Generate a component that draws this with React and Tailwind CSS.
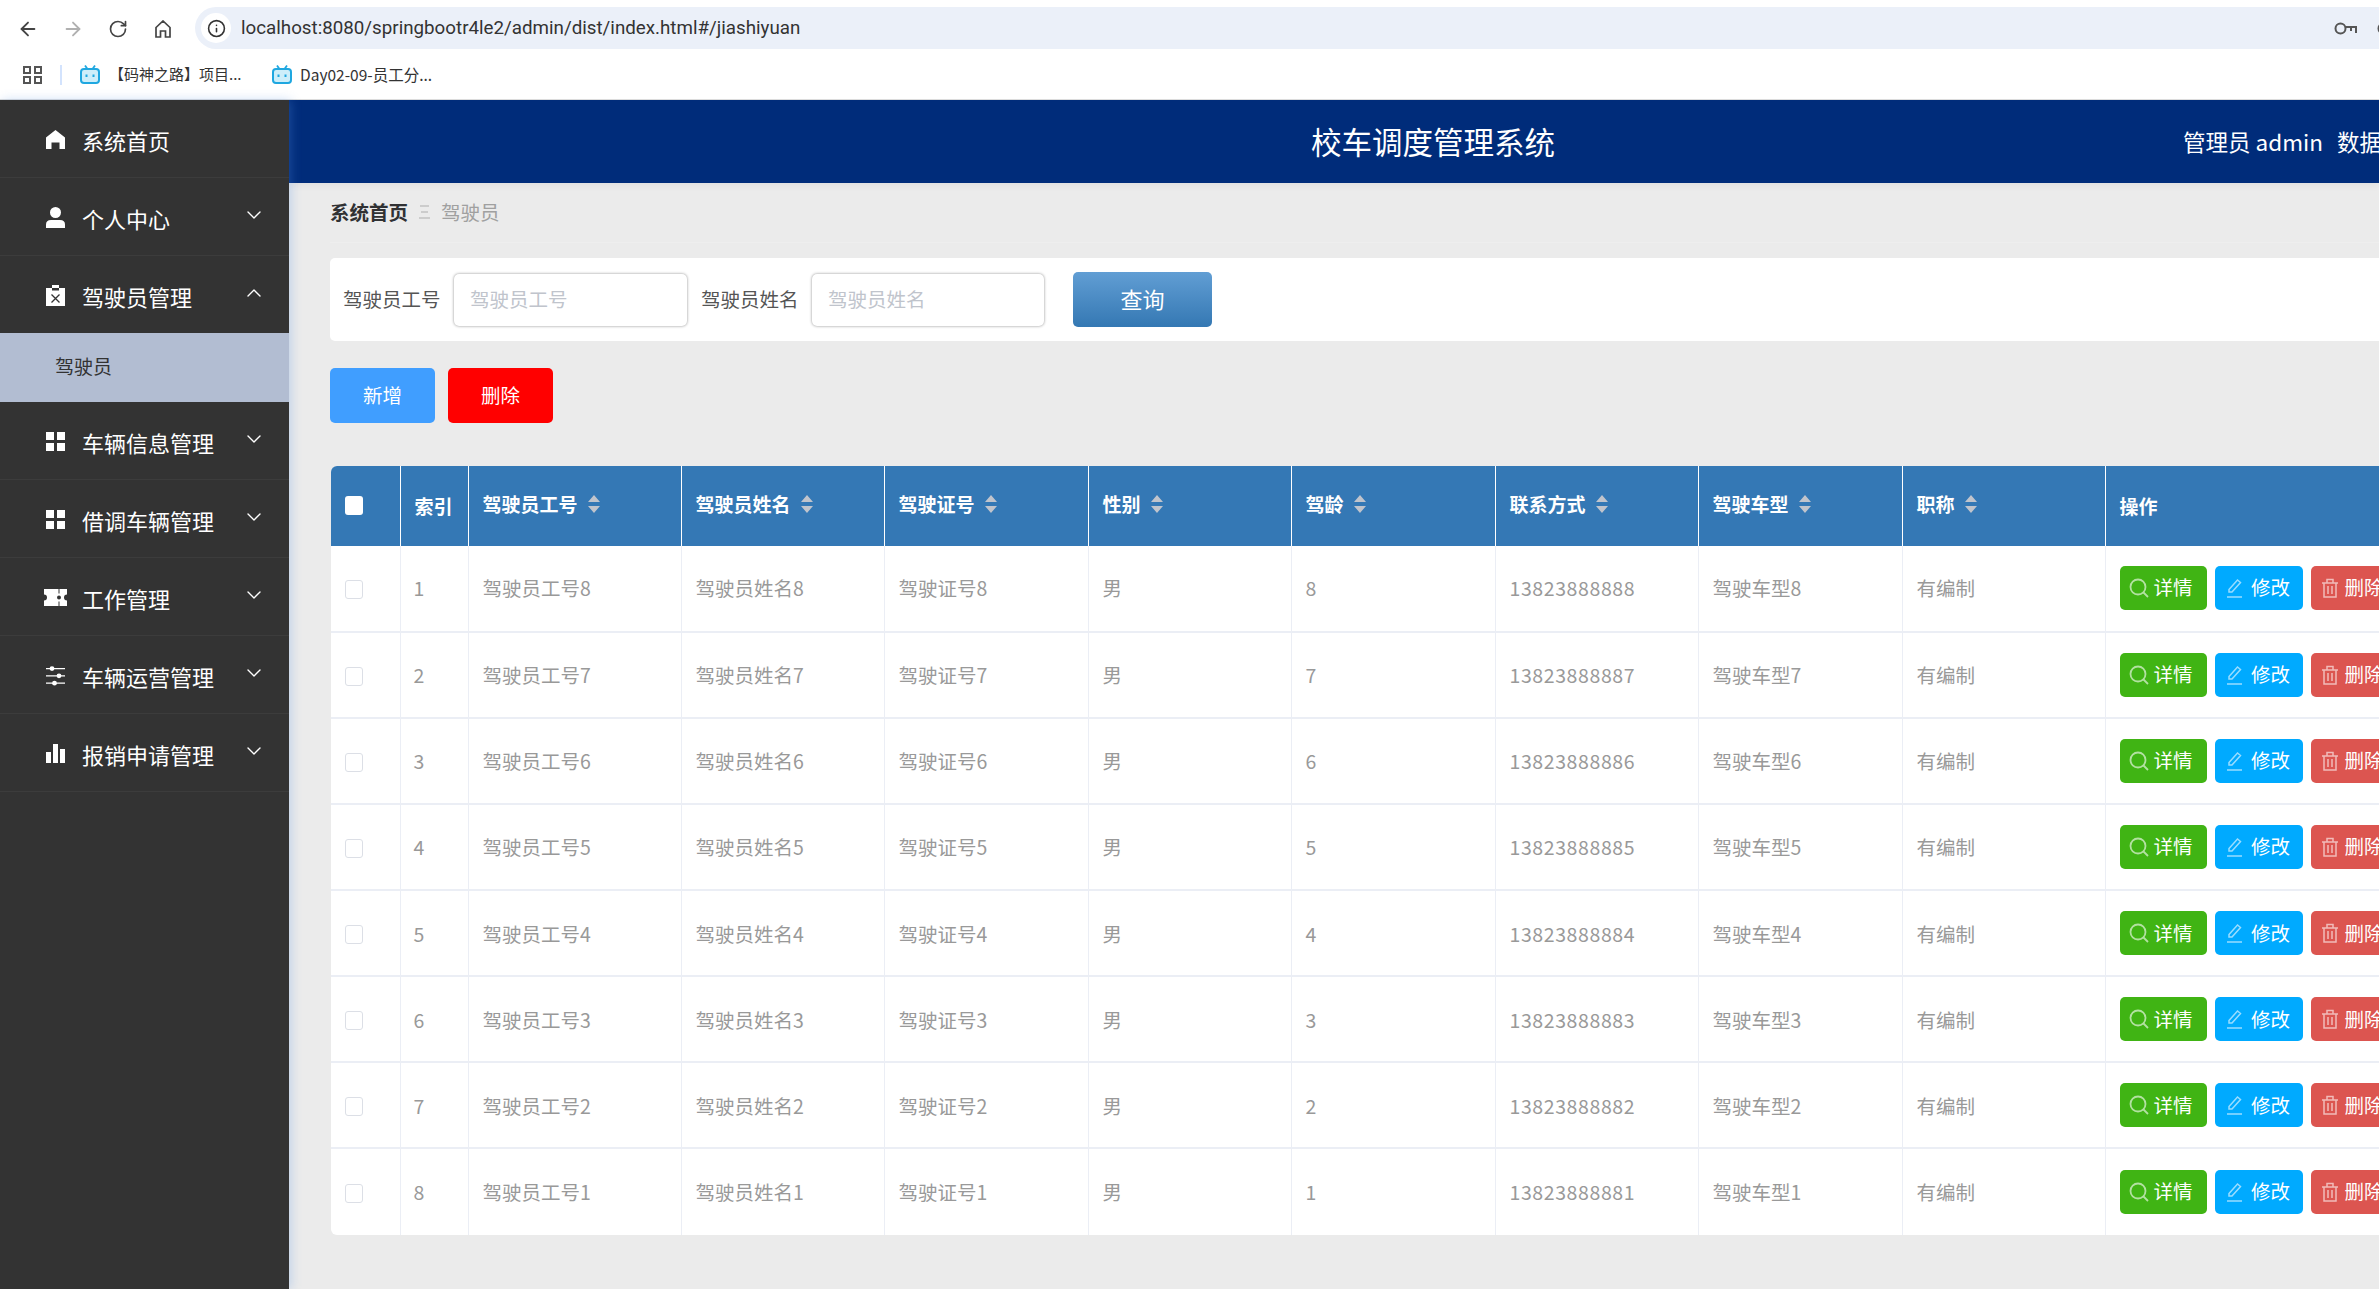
import { ArrowLeft, ArrowRight, RotateCw, Info, ChevronDown, ChevronUp } from "lucide-react";

const font = "font-['Noto_Sans_CJK_SC','Noto_Sans',sans-serif]";

function HomeIcon() {
    return (
        <svg viewBox="0 0 19 19" className="w-[19px] h-[19px] fill-white">
            <path d="M9.5 0 19 7.5V19h-5.5v-6.5h-8V19H0V7.5z" />
        </svg>
    );
}

function UserIcon() {
    return (
        <svg viewBox="0 0 19 21" className="w-[19px] h-[21px] fill-white">
            <circle cx="9.5" cy="5.5" r="5.5" />
            <path d="M0 21v-3.5Q0 13 5 13h9q5 0 5 4.5V21z" />
        </svg>
    );
}

function ClipboardIcon() {
    return (
        <svg viewBox="0 0 19 21" className="w-[19px] h-[21px]">
            <path d="M0 3h6V0h7v3h6v18H0z" fill="#fff" />
            <path d="M6 3h7v2.5H6z" fill="#333" />
            <path d="M5.5 9.5l8 8M13.5 9.5l-8 8" stroke="#333" strokeWidth="1.3" />
        </svg>
    );
}

function GridIcon() {
    return (
        <svg viewBox="0 0 19 19" className="w-[19px] h-[19px] fill-white">
            <path d="M0 0h8v8H0zM11 0h8v8h-8zM0 11h8v8H0zM11 11h8v8h-8z" />
        </svg>
    );
}

function TicketIcon() {
    return (
        <svg viewBox="0 0 23 17" className="w-[23px] h-[17px] shrink-0 fill-white">
            <path d="M0 0h14.5v4.5h1V0H23v5.5a3 3 0 0 0 0 6V17h-7.5v-4.5h-1V17H0v-5.5a3 3 0 0 0 0-6z" />
            <path d="M15 6.5a2 2 0 0 0 0 4 2 2 0 0 0 0-4z" fill="#333" />
        </svg>
    );
}

function SlidersIcon() {
    return (
        <svg viewBox="0 0 19 20" className="w-[19px] h-[20px] fill-white">
            <path d="M0 2h19v1.3H0zM0 9.2h19v1.3H0zM0 16.5h19v1.3H0z" />
            <circle cx="6" cy="2.6" r="2.4" />
            <circle cx="13" cy="9.8" r="2.4" />
            <circle cx="8.5" cy="17.2" r="2.4" />
        </svg>
    );
}

function BarsIcon() {
    return (
        <svg viewBox="0 0 19 19" className="w-[19px] h-[19px] fill-white">
            <path d="M0 8h5v11H0zM7 0h5v19H7zM14 5h5v14h-5z" />
        </svg>
    );
}

function BiliIcon() {
    return (
        <svg viewBox="0 0 20 19" className="w-[20px] h-[19px] shrink-0" fill="none" stroke="#1fa7e0">
            <path d="M5 .5 7.5 4M15 .5 12.500 4" strokeWidth="1.8" />
            <rect x="1" y="4" width="18" height="14" rx="3" strokeWidth="2" fill="#cdeefa" />
            <path d="M6.500 9.500v2.500M13.500 9.500v2.500" strokeWidth="2" />
        </svg>
    );
}

function AppsIcon() {
    return (
        <svg viewBox="0 0 19 18" className="w-[19px] h-[18px]" fill="none" stroke="#555" strokeWidth="2">
            <path d="M1 1h6v6H1zM12 1h6v6h-6zM1 11h6v6H1zM12 11h6v6h-6z" />
        </svg>
    );
}

function ChromeHome() {
    return (
        <svg viewBox="0 0 16 18" className="w-[16px] h-[18px]" fill="none" stroke="#444" strokeWidth="1.700">
            <path d="M1 7.500 8 1l7 6.500V17h-4.500v-6h-5v6H1z" />
        </svg>
    );
}

function KeyIcon() {
    return (
        <svg viewBox="0 0 23 13" className="w-[23px] h-[13px] shrink-0" fill="none" stroke="#555" strokeWidth="2">
            <circle cx="6.500" cy="6.500" r="5" />
            <path d="M11.500 5h10.500v6M17 5v4" />
        </svg>
    );
}

function SortIcon() {
    return (
        <svg viewBox="0 0 12 18" className="w-[12px] h-[18px] ml-[10px] shrink-0 fill-[#c0c4cc]">
            <path d="M6 0l6 7H0zM0 11h12l-6 7z" />
        </svg>
    );
}

function SearchGlyph() {
    return (
        <svg viewBox="0 0 20 20" className="w-[20px] h-[20px] shrink-0 opacity-60" fill="none" stroke="#fff" strokeWidth="1.800">
            <circle cx="9" cy="9" r="7.500" />
            <path d="M14.500 14.500 19 19" />
        </svg>
    );
}

function EditGlyph() {
    return (
        <svg viewBox="0 0 16 20" className="w-[16px] h-[20px] shrink-0 opacity-60" fill="none" stroke="#fff" strokeWidth="1.500">
            <path d="M2 11.500 10.500 2l3 2.500L5 14H2zM0 19h15" />
        </svg>
    );
}

function TrashGlyph() {
    return (
        <svg viewBox="0 0 18 20" className="w-[18px] h-[20px] shrink-0 opacity-60" fill="none" stroke="#fff" strokeWidth="1.500">
            <path d="M1 5h16M6 5V1.500h6V5M3 5v14h12V5M7 8v8M11 8v8" />
        </svg>
    );
}

const menus = [
    { title: "系统首页", icon: <HomeIcon /> },
    { title: "个人中心", icon: <UserIcon />, arrow: true },
    { title: "驾驶员管理", icon: <ClipboardIcon />, open: true },
    { title: "车辆信息管理", icon: <GridIcon />, arrow: true },
    { title: "借调车辆管理", icon: <GridIcon />, arrow: true },
    { title: "工作管理", icon: <TicketIcon />, arrow: true },
    { title: "车辆运营管理", icon: <SlidersIcon />, arrow: true },
    { title: "报销申请管理", icon: <BarsIcon />, arrow: true },
];

const columns = ["驾驶员工号", "驾驶员姓名", "驾驶证号", "性别", "驾龄", "联系方式", "驾驶车型", "职称"];

const rows = [8, 7, 6, 5, 4, 3, 2, 1];

function Sidebar() {
    return (
        <aside className="w-[289px] shrink-0 bg-[#333333] relative z-10 shadow-[2px_0_10px_rgba(90,150,230,0.3)]">
            {menus.map((menu) => (
                <div key={menu.title}>
                    <div
                        className={`flex items-center pl-[46px] pr-[23px] text-white text-[22px] ${
                            menu.open ? "h-[77px]" : "h-[78px] border-b border-[#3c3c3c]"
                        }`}
                    >
                        <span className="w-[19px] flex justify-center mt-[2px]">{menu.icon}</span>
                        <span className="ml-[17px] flex-1 mt-[3px]">{menu.title}</span>
                        {menu.arrow && <ChevronDown className="w-[24px] h-[24px] -mt-[4px] text-white" strokeWidth={1.400} />}
                        {menu.open && <ChevronUp className="w-[24px] h-[24px] -mt-[4px] text-white" strokeWidth={1.400} />}
                    </div>
                    {menu.open && (
                        <div className="h-[69px] flex items-center pl-[55px] pb-[2px] bg-[#b2bdd2] text-[19px] text-[#333]">
                            驾驶员
                        </div>
                    )}
                </div>
            ))}
        </aside>
    );
}

function ActionButton({ className, icon, label }) {
    return (
        <button className={`w-[87.500px] h-[44px] shrink-0 rounded-[5px] flex items-center text-[19.500px] text-white ${className}`}>
            {icon}
            <span className="-mt-[2px]">{label}</span>
        </button>
    );
}

function DriverTable() {
    return (
        <table className="table-fixed border-collapse w-[2240px] mt-[43px] ml-px bg-white rounded-[6px] overflow-hidden text-[19.500px]">
            <colgroup>
                <col className="w-[69px]" />
                <col className="w-[68px]" />
                <col className="w-[213px]" />
                <col className="w-[203px]" />
                <col className="w-[204px]" />
                <col className="w-[203px]" />
                <col className="w-[204px]" />
                <col className="w-[203px]" />
                <col className="w-[204px]" />
                <col className="w-[203px]" />
                <col />
            </colgroup>
            <thead>
                <tr className="h-[79.500px] bg-[#3478b5] text-white font-bold text-[19px]">
                    <th className="pl-[14px] text-left">
                        <span className="block w-[18px] h-[19px] bg-white rounded-[3px]"></span>
                    </th>
                    <th className="border-l border-white pl-[14px] text-left">索引</th>
                    {columns.map((title) => (
                        <th key={title} className="border-l border-white pl-[14px] text-left">
                            <div className="flex items-center -mt-[4px]">
                                {title}
                                <SortIcon />
                            </div>
                        </th>
                    ))}
                    <th className="border-l border-white pl-[14px] text-left">操作</th>
                </tr>
            </thead>
            <tbody className="text-[#999999]">
                {rows.map((n, i) => (
                    <tr key={n} className="h-[86.150px] border-b-2 border-[#ebeef5] last:border-b-0">
                        <td className="pl-[14px]">
                            <span className="block w-[18px] h-[19px] mt-[3px] border border-[#dcdfe6] rounded-[3px]"></span>
                        </td>
                        <td className="border-l border-[#ebeef5] pl-[13px]">{i + 1}</td>
                        <td className="border-l border-[#ebeef5] pl-[14px]">驾驶员工号{n}</td>
                        <td className="border-l border-[#ebeef5] pl-[14px]">驾驶员姓名{n}</td>
                        <td className="border-l border-[#ebeef5] pl-[14px]">驾驶证号{n}</td>
                        <td className="border-l border-[#ebeef5] pl-[14px]">男</td>
                        <td className="border-l border-[#ebeef5] pl-[14px]">{n}</td>
                        <td className="border-l border-[#ebeef5] pl-[14px] tracking-[0.6px]">1382388888{n}</td>
                        <td className="border-l border-[#ebeef5] pl-[14px]">驾驶车型{n}</td>
                        <td className="border-l border-[#ebeef5] pl-[14px]">有编制</td>
                        <td className="border-l border-[#ebeef5] pl-[14px]">
                            <div className="flex gap-[8px]">
                                <ActionButton className="bg-[#40b414] pl-[9px] gap-[5px]" icon={<SearchGlyph />} label="详情" />
                                <ActionButton className="bg-[#00aaff] pl-[12px] gap-[8px]" icon={<EditGlyph />} label="修改" />
                                <ActionButton className="bg-[#dc5550] pl-[10px] gap-[6px]" icon={<TrashGlyph />} label="删除" />
                            </div>
                        </td>
                    </tr>
                ))}
            </tbody>
        </table>
    );
}

export default function App() {
    return (
        <div className={`w-[2379px] h-[1289px] overflow-hidden flex flex-col bg-white ${font}`}>
            {/* browser toolbar */}
            <div className="h-[50px] flex items-end shrink-0">
                <div className="h-[43px] w-[195px] flex items-center pl-[5px] shrink-0">
                    <span className="w-[45px] flex justify-center">
                        <ArrowLeft className="w-[22px] h-[22px] text-[#444]" strokeWidth={2} />
                    </span>
                    <span className="w-[45px] flex justify-center">
                        <ArrowRight className="w-[22px] h-[22px] text-[#b0b0b0]" strokeWidth={2} />
                    </span>
                    <span className="w-[45px] flex justify-center">
                        <RotateCw className="w-[20px] h-[20px] text-[#444]" strokeWidth={2} />
                    </span>
                    <span className="w-[45px] flex justify-center">
                        <ChromeHome />
                    </span>
                </div>
                <div className="flex-1 h-[42px] mb-px bg-[#ebf0f9] rounded-l-[21px] flex items-center pl-[6px]">
                    <span className="w-[30px] h-[30px] rounded-full bg-white flex items-center justify-center shrink-0">
                        <Info className="w-[19px] h-[19px] text-[#333]" strokeWidth={2} />
                    </span>
                    <span className="ml-[10px] flex-1 text-[18.750px] text-[#333] font-['Roboto','Noto_Sans',sans-serif]">
                        localhost:8080/springbootr4le2/admin/dist/index.html#/jiashiyuan
                    </span>
                    <KeyIcon />
                    <span className="w-[2px] shrink-0 ml-[20px] overflow-hidden">
                        <KeyIcon />
                    </span>
                </div>
            </div>
            {/* bookmarks */}
            <div className="h-[50px] flex items-center pl-[23px] shrink-0 text-[15px] text-[#333] border-b border-[#dcdcdc]">
                <AppsIcon />
                <span className="w-[2px] h-[20px] ml-[18px] bg-[#d3e3fd]"></span>
                <span className="ml-[18px]"><BiliIcon /></span>
                <span className="ml-[9px] w-[163px]">【码神之路】项目...</span>
                <BiliIcon />
                <span className="ml-[8px] text-[15.500px]">Day02-09-员工分...</span>
            </div>
            <div className="flex-1 flex min-h-0">
                <Sidebar />
                <main className="flex-1 min-w-0 overflow-hidden bg-[#ebebeb]">
                    <header className="h-[83px] bg-[#002c7a] text-white flex items-center pl-[1022px] whitespace-nowrap shadow-[0_2px_8px_rgba(0,0,0,0.06)]">
                        <span className="text-[30.500px]">校车调度管理系统</span>
                        <span className="ml-[628px] text-[22.500px]">管理员 admin</span>
                        <span className="ml-[14px] text-[22.500px]">数据</span>
                    </header>
                    <div className="pl-[41px] w-[2300px]">
                        {/* breadcrumb */}
                        <div className="h-[60px] pb-[2px] flex items-center text-[19.500px] border-b border-[#eeeeee]">
                            <span className="font-bold text-[#303133]">系统首页</span>
                            <svg viewBox="0 0 11 14" className="w-[11px] h-[14px] mx-[11px] fill-[#cccccc]">
                                <path d="M1 0h9v2H1zM2 6h7v2H2zM0 12h11v2H0z" />
                            </svg>
                            <span className="text-[#a0a0a0]">驾驶员</span>
                        </div>
                        {/* search form */}
                        <div className="mt-[15px] h-[83px] bg-white rounded-[5px] flex items-center pl-[13px] text-[19.500px] text-[#555]">
                            <label className="-mt-[2px]">驾驶员工号</label>
                            <input
                                className="ml-[13.500px] w-[233px] h-[52px] rounded-[5px] pl-[16px] pb-[2px] bg-white outline-none shadow-[0_0_3px_rgba(0,0,0,0.45)] placeholder:text-[#c0c4cc]"
                                placeholder="驾驶员工号"
                            />
                            <label className="ml-[14px] -mt-[2px]">驾驶员姓名</label>
                            <input
                                className="ml-[13.500px] w-[232px] h-[52px] rounded-[5px] pl-[16px] pb-[2px] bg-white outline-none shadow-[0_0_3px_rgba(0,0,0,0.45)] placeholder:text-[#c0c4cc]"
                                placeholder="驾驶员姓名"
                            />
                            <button className="ml-[29px] w-[139px] h-[55px] pb-[2px] rounded-[5px] bg-gradient-to-b from-[#619ed4] to-[#3478b3] text-white text-[22px]">
                                查询
                            </button>
                        </div>
                        {/* actions */}
                        <div className="mt-[27px] flex gap-[13px] text-[19.500px] text-white">
                            <button className="w-[105px] h-[55px] pb-[2px] rounded-[5px] bg-[#409eff]">新增</button>
                            <button className="w-[105px] h-[55px] pb-[2px] rounded-[5px] bg-[#ff0000]">删除</button>
                        </div>
                        <DriverTable />
                    </div>
                </main>
            </div>
        </div>
    );
}
